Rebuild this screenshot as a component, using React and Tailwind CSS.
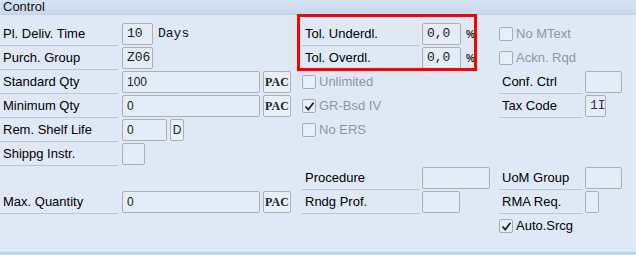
const sans = { fontFamily: '"Liberation Sans", Arial, sans-serif' };

function Label({ children, w = 'w-[118px]' }) {
  return (
    <div className={`${w} h-full flex items-center border-b border-[#bcc7d3] pl-[3px] text-[13px] text-[#000] shrink-0`}>
      {children}
    </div>
  );
}

function Box({ w, children, mono = true, color = 'text-[#1a1a2a]', className = '' }) {
  return (
    <div
      className={`${w} h-[22px] border border-[#a9b0b8] rounded-[2px] bg-[#e4ecf6] flex items-center px-[4px] ${color} ${mono ? 'font-[Liberation_Mono,monospace] text-[13px]' : 'text-[12px]'} ${className}`}
    >
      {children}
    </div>
  );
}

function Unit({ children, w = 'w-[28px]', serif = true }) {
  return (
    <div
      className={`${w} h-[22px] border border-[#a9b0b8] rounded-[2px] bg-[#eaf0f8] flex items-center justify-center text-[12px] text-[#222] ml-[3px] ${serif ? 'font-bold font-[Liberation_Serif,serif]' : ''}`}
    >
      {children}
    </div>
  );
}

function Check({ label, checked, disabled }) {
  return (
    <div className="h-full flex items-center gap-[3px]">
      <div className="w-[14px] h-[14px] border border-[#a4abb3] rounded-[2px] bg-[#e6eef8] flex items-center justify-center">
        {checked && (
          <svg width="11" height="11" viewBox="0 0 11 11">
            <path d="M1.5 5.5 L4.2 8.5 L9.5 1.8" fill="none" stroke="#222" strokeWidth="1.8" />
          </svg>
        )}
      </div>
      <span className={`text-[13px] ${disabled ? 'text-[#8f959c]' : 'text-[#000]'}`}>{label}</span>
    </div>
  );
}

function Row({ children }) {
  return <div className="h-[24px] flex items-center">{children}</div>;
}

export default function App() {
  return (
    <div className="w-[636px] h-[255px] bg-[#dfe9f5] relative overflow-hidden" style={sans}>
      <div className="h-[15px] bg-gradient-to-b from-[#d6e3f3] to-[#c8d9ee] border-b border-[#c0d2e8] flex items-center pl-[3px] text-[13px] text-[#111]">
        Control
      </div>

      <div className="flex pt-[7px]">
        {/* column 1 */}
        <div className="w-[298px] shrink-0">
          <Row>
            <Label>Pl. Deliv. Time</Label>
            <div className="ml-[4px] flex items-center">
              <Box w="w-[31px]">10</Box>
              <span className="ml-[5px] text-[13px] font-[Liberation_Mono,monospace] text-[#111]">Days</span>
            </div>
          </Row>
          <Row>
            <Label>Purch. Group</Label>
            <div className="ml-[4px]"><Box w="w-[31px]" className="px-[3px]">Z06</Box></div>
          </Row>
          <Row>
            <Label>Standard Qty</Label>
            <div className="ml-[4px] flex"><Box w="w-[138px]" mono={false}>100</Box><Unit>PAC</Unit></div>
          </Row>
          <Row>
            <Label>Minimum Qty</Label>
            <div className="ml-[4px] flex"><Box w="w-[138px]" mono={false}>0</Box><Unit>PAC</Unit></div>
          </Row>
          <Row>
            <Label>Rem. Shelf Life</Label>
            <div className="ml-[4px] flex"><Box w="w-[45px]" mono={false}>0</Box><Unit w="w-[14px]" serif={false}>D</Unit></div>
          </Row>
          <Row>
            <Label>Shippg Instr.</Label>
            <div className="ml-[4px]"><Box w="w-[23px]" /></div>
          </Row>
          <Row />
          <Row>
            <Label>Max. Quantity</Label>
            <div className="ml-[4px] flex"><Box w="w-[138px]" mono={false}>0</Box><Unit>PAC</Unit></div>
          </Row>
          <Row />
        </div>

        {/* column 2 */}
        <div className="w-[198px] shrink-0 pl-[4px]">
          <Row>
            <Label>Tol. Underdl.</Label>
            <div className="ml-[2px] flex items-center">
              <Box w="w-[39px]">0,0</Box>
              <span className="ml-[5px] text-[10px] font-bold text-[#222]">%</span>
            </div>
          </Row>
          <Row>
            <Label>Tol. Overdl.</Label>
            <div className="ml-[2px] flex items-center">
              <Box w="w-[39px]">0,0</Box>
              <span className="ml-[5px] text-[10px] font-bold text-[#222]">%</span>
            </div>
          </Row>
          <Row><Check label="Unlimited" disabled /></Row>
          <Row><Check label="GR-Bsd IV" checked disabled /></Row>
          <Row><Check label="No ERS" disabled /></Row>
          <Row />
          <Row>
            <Label>Procedure</Label>
            <div className="ml-[2px]"><Box w="w-[68px]" /></div>
          </Row>
          <Row>
            <Label>Rndg Prof.</Label>
            <div className="ml-[2px]"><Box w="w-[38px]" /></div>
          </Row>
          <Row />
        </div>

        {/* column 3 */}
        <div className="flex-1 pl-[3px]">
          <Row><Check label="No MText" disabled /></Row>
          <Row><Check label="Ackn. Rqd" disabled /></Row>
          <Row>
            <Label w="w-[84px]">Conf. Ctrl</Label>
            <div className="ml-[2px]"><Box w="w-[37px]" /></div>
          </Row>
          <Row>
            <Label w="w-[84px]">Tax Code</Label>
            <div className="ml-[2px]"><Box w="w-[21px]" color="text-[#4a1f55]" className="px-[1px]">1I</Box></div>
          </Row>
          <Row />
          <Row />
          <Row>
            <Label w="w-[84px]">UoM Group</Label>
            <div className="ml-[2px]"><Box w="w-[37px]" /></div>
          </Row>
          <Row>
            <Label w="w-[84px]">RMA Req.</Label>
            <div className="ml-[2px]"><Box w="w-[14px]" /></div>
          </Row>
          <Row><Check label="Auto.Srcg" checked /></Row>
        </div>
      </div>

      <div className="absolute left-0 right-0 top-[252px] h-[3px] bg-[#c5d6ea] border-t border-[#b4c8e0]" />

      <div className="absolute left-[297px] top-[14px] w-[180px] h-[57px] border-[3px] border-[#ff0000] pointer-events-none" />
    </div>
  );
}
